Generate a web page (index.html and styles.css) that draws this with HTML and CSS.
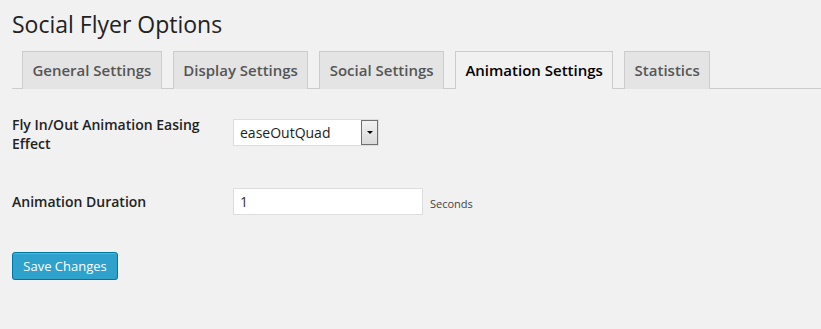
FILE: index.html
```html
<!DOCTYPE html>
<html>
<head>
<meta charset="utf-8">
<link rel="stylesheet" href="styles.css">
</head>
<body>
<div class="wrap">
  <h2 class="title">Social Flyer Options</h2>
  <div class="tabs">
    <a class="tab">General Settings</a>
    <a class="tab">Display Settings</a>
    <a class="tab">Social Settings</a>
    <a class="tab active">Animation Settings</a>
    <a class="tab">Statistics</a>
  </div>
  <div class="form">
    <div class="row row-select">
      <div class="label">Fly In/Out Animation Easing Effect</div>
      <div class="field">
        <div class="select">
          <span class="select-text">easeOutQuad</span>
          <span class="select-btn"><span class="arrow"></span></span>
        </div>
      </div>
    </div>
    <div class="row row-input">
      <div class="label">Animation Duration</div>
      <div class="field">
        <div class="input">1</div>
        <span class="desc">Seconds</span>
      </div>
    </div>
  </div>
  <div class="submit">
    <button class="btn">Save Changes</button>
  </div>
</div>
</body>
</html>
```
FILE: styles.css
```css
html, body {
  margin: 0;
  padding: 0;
  background: #f1f1f1;
}
body {
  font-family: "Open Sans", "Liberation Sans", sans-serif;
  color: #444;
  font-size: 13px;
}
.wrap {
  padding: 10px 0 0 12px;
}
.title {
  margin: 0;
  font-size: 23px;
  font-weight: 400;
  line-height: 29px;
  color: #222;
}
.tabs {
  display: flex;
  gap: 11px;
  margin-top: 12px;
  padding-left: 10px;
  border-bottom: 1px solid #ccc;
  height: 37px;
  align-items: flex-end;
}
.tab {
  display: block;
  box-sizing: border-box;
  height: 38px;
  margin-bottom: -1px;
  padding: 0 9.4px;
  border: 1px solid #ccc;
  border-bottom: none;
  background: #e4e4e4;
  color: #555;
  font-size: 15px;
  font-weight: 600;
  line-height: 36px;
  white-space: nowrap;
}
.tab.active {
  background: #f1f1f1;
  color: #000;
  height: 38px;
}
.form {
  padding-top: 20px;
}
.row {
  display: flex;
  align-items: flex-start;
}
.label {
  width: 221px;
  font-size: 14px;
  font-weight: 600;
  color: #222;
  line-height: 19px;
}
.row-select .label {
  width: 190px;
  margin-right: 31px;
  margin-top: 6px;
}
.row-select {
  height: 79px;
}
.row-select .field {
  margin-top: 10px;
}
.row-input {
  align-items: center;
  height: 27px;
}
.field {
  display: flex;
  align-items: center;
}
.select {
  box-sizing: border-box;
  width: 146px;
  height: 27px;
  border: 1px solid #ddd;
  background: #fff;
  display: flex;
  align-items: center;
  justify-content: space-between;
  padding: 0 0 0 6px;
}
.select-text {
  font-size: 14px;
  color: #222;
}
.select-btn {
  box-sizing: border-box;
  width: 17px;
  height: 25px;
  border: 1px solid #707070;
  background: linear-gradient(#f2f2f2, #dadada);
  display: flex;
  align-items: center;
  justify-content: center;
}
.arrow {
  width: 0;
  height: 0;
  border-left: 3px solid transparent;
  border-right: 3px solid transparent;
  border-top: 3px solid #000;
}
.input {
  box-sizing: border-box;
  width: 190px;
  height: 27px;
  border: 1px solid #ddd;
  background: #fff;
  font-size: 14px;
  line-height: 25px;
  padding-left: 6px;
  color: #333;
}
.desc {
  font-size: 11px;
  color: #444;
  margin-left: 7px;
  padding-top: 3px;
}
.submit {
  padding-top: 37px;
}
.btn {
  box-sizing: border-box;
  width: 106px;
  height: 28px;
  background: #2ea2cc;
  border: 1px solid #0074a2;
  border-radius: 3px;
  color: #fff;
  font-family: "Open Sans", "Liberation Sans", sans-serif;
  font-size: 13px;
  line-height: 26px;
  padding: 0;
  box-shadow: inset 0 1px 0 rgba(120,200,230,.5), 0 1px 0 rgba(0,0,0,.15);
}
```
